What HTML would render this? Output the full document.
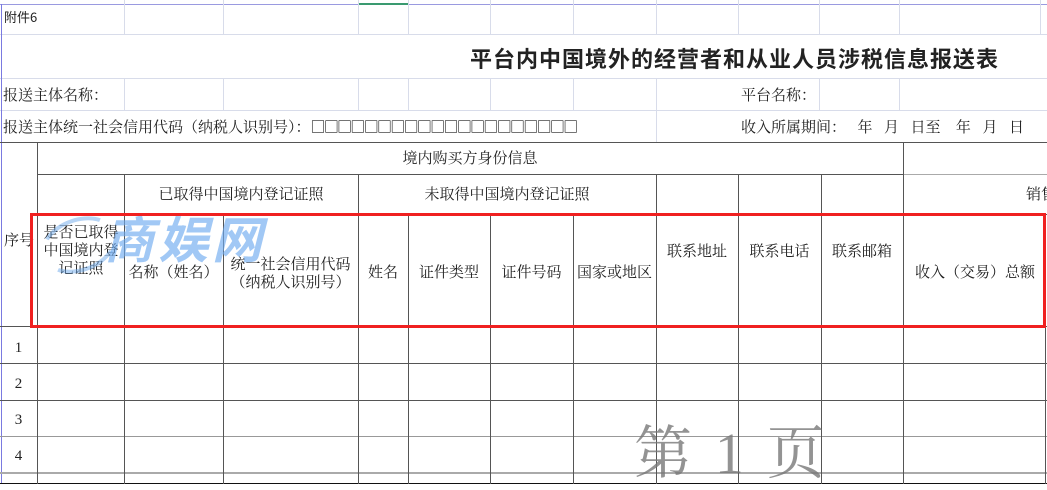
<!DOCTYPE html>
<html><head><meta charset="utf-8"><style>
body{margin:0;width:1047px;height:484px;background:#fff;overflow:hidden;position:relative;font-family:"Noto Serif CJK SC","Liberation Serif",serif;color:#222}
.h,.v{position:absolute;background:#555}
.h{height:1px}.v{width:1px}
.l{background:#d8dcea}
.t{position:absolute;white-space:nowrap;font-size:15px;line-height:18px}
.c{position:absolute;text-align:center;font-size:15px;line-height:18px}
.n{font-family:"Liberation Serif",serif}
</style></head><body>
<div class="h l" style="left:0;top:4px;width:1047px;background:#9a9ae0"></div>
<div class="h" style="left:358px;top:3px;width:50px;background:#3a9a70;height:2px"></div>
<div class="h l" style="left:0;top:34px;width:1047px"></div>
<div class="h l" style="left:0;top:78px;width:1047px"></div>
<div class="h l" style="left:0;top:110px;width:1047px"></div>
<div class="v l" style="left:124px;top:0;height:34px"></div>
<div class="v l" style="left:223px;top:0;height:34px"></div>
<div class="v l" style="left:358px;top:0;height:34px"></div>
<div class="v l" style="left:408px;top:0;height:34px"></div>
<div class="v l" style="left:490px;top:0;height:34px"></div>
<div class="v l" style="left:573px;top:0;height:34px"></div>
<div class="v l" style="left:656px;top:0;height:34px"></div>
<div class="v l" style="left:738px;top:0;height:34px"></div>
<div class="v l" style="left:819px;top:0;height:34px"></div>
<div class="v l" style="left:899px;top:0;height:34px"></div>
<div class="v l" style="left:1040px;top:0;height:34px"></div>
<div class="v l" style="left:124px;top:78px;height:32px"></div>
<div class="v l" style="left:223px;top:78px;height:32px"></div>
<div class="v l" style="left:358px;top:78px;height:32px"></div>
<div class="v l" style="left:408px;top:78px;height:32px"></div>
<div class="v l" style="left:490px;top:78px;height:32px"></div>
<div class="v l" style="left:573px;top:78px;height:32px"></div>
<div class="v l" style="left:656px;top:78px;height:64px"></div>
<div class="v l" style="left:819px;top:78px;height:32px"></div>
<div class="v l" style="left:899px;top:78px;height:32px"></div>
<div class="v" style="left:1px;top:4px;height:480px;background:#7a7ae0"></div>

<div class="t" style="left:4px;top:8px;font-family:'Noto Sans CJK SC',sans-serif;font-size:13px">附件6</div>
<div class="t" style="left:470px;top:45px;font-size:22px;line-height:26px;font-weight:bold;font-family:'Noto Sans CJK SC',sans-serif;letter-spacing:1px">平台内中国境外的经营者和从业人员涉税信息报送表</div>
<div class="t" style="left:3px;top:86px">报送主体名称：</div>
<div class="t" style="left:3px;top:118px">报送主体统一社会信用代码（纳税人识别号）：<span style="letter-spacing:-1.7px">□□□□□□□□□□□□□□□□□□□□</span></div>
<div class="t" style="left:741px;top:86px">平台名称：</div>
<div class="t" style="left:741px;top:118px">收入所属期间：&nbsp;&nbsp;&nbsp;年&nbsp;&nbsp;&nbsp;月&nbsp;&nbsp;&nbsp;日至&nbsp;&nbsp;&nbsp;&nbsp;年&nbsp;&nbsp;&nbsp;月&nbsp;&nbsp;&nbsp;日</div>

<div class="h" style="left:0;top:142px;width:1047px"></div>
<div class="h" style="left:37px;top:174px;width:866px"></div>
<div class="h" style="left:903px;top:174px;width:144px;background:#aaa"></div>
<div class="h" style="left:37px;top:214px;width:1010px"></div>
<div class="h" style="left:0;top:326px;width:1047px"></div>
<div class="h" style="left:0;top:363px;width:1047px"></div>
<div class="h" style="left:0;top:400px;width:1047px"></div>
<div class="h" style="left:0;top:436px;width:1047px;background:#999"></div>
<div class="h" style="left:0;top:472px;width:1047px;background:#aaa;height:2px"></div>
<div class="h" style="left:0;top:483px;width:1047px;background:#111"></div>
<div class="v" style="left:37px;top:142px;height:342px"></div>
<div class="v" style="left:124px;top:174px;height:310px"></div>
<div class="v" style="left:223px;top:214px;height:270px"></div>
<div class="v" style="left:358px;top:174px;height:310px"></div>
<div class="v" style="left:408px;top:214px;height:270px"></div>
<div class="v" style="left:490px;top:214px;height:270px"></div>
<div class="v" style="left:573px;top:214px;height:270px"></div>
<div class="v" style="left:656px;top:174px;height:310px"></div>
<div class="v" style="left:738px;top:174px;height:310px"></div>
<div class="v" style="left:821px;top:174px;height:310px"></div>
<div class="v" style="left:903px;top:142px;height:342px"></div>
<div class="v" style="left:1045px;top:326px;height:158px"></div>

<div class="c" style="left:37px;width:866px;top:149px">境内购买方身份信息</div>
<div class="c" style="left:124px;width:234px;top:185px">已取得中国境内登记证照</div>
<div class="c" style="left:358px;width:298px;top:185px">未取得中国境内登记证照</div>
<div class="t" style="left:1026px;top:185px">销售</div>
<div class="t" style="left:4px;top:231px">序号</div>
<div class="c" style="left:38px;width:86px;top:223px">是否已取得<br>中国境内登<br>记证照</div>
<div class="c" style="left:124px;width:99px;top:263px">名称（姓名）</div>
<div class="c" style="left:223px;width:135px;top:255px">统一社会信用代码<br>（纳税人识别号）</div>
<div class="c" style="left:358px;width:50px;top:263px">姓名</div>
<div class="c" style="left:408px;width:82px;top:263px">证件类型</div>
<div class="c" style="left:490px;width:83px;top:263px">证件号码</div>
<div class="c" style="left:573px;width:83px;top:263px">国家或地区</div>
<div class="c" style="left:656px;width:82px;top:242px">联系地址</div>
<div class="c" style="left:738px;width:83px;top:242px">联系电话</div>
<div class="c" style="left:821px;width:82px;top:242px">联系邮箱</div>
<div class="c" style="left:903px;width:144px;top:263px">收入（交易）总额</div>
<div class="c n" style="left:0;width:37px;top:339px">1</div>
<div class="c n" style="left:0;width:37px;top:375px">2</div>
<div class="c n" style="left:0;width:37px;top:411px">3</div>
<div class="c n" style="left:0;width:37px;top:447px">4</div>

<div style="position:absolute;left:40px;top:218px;width:70px;height:46px;border-radius:50%;border:4px solid rgba(110,170,235,.5);border-color:rgba(110,170,235,.5) transparent rgba(110,170,235,.5) transparent;transform:rotate(-20deg)"></div>
<div class="t" style="left:104px;top:208px;font-size:50px;line-height:58px;font-weight:bold;font-style:italic;color:rgba(110,170,240,.65);font-family:'Noto Sans CJK SC',sans-serif;letter-spacing:4px">商娱网</div>
<div class="t" style="left:634px;top:415px;font-size:58px;line-height:66px;color:rgba(120,120,120,.8);letter-spacing:4px">第 <span class="n">1</span> 页</div>

<div style="position:absolute;left:30px;top:213px;width:1010px;height:109px;border:3px solid #f02020"></div>
</body></html>
